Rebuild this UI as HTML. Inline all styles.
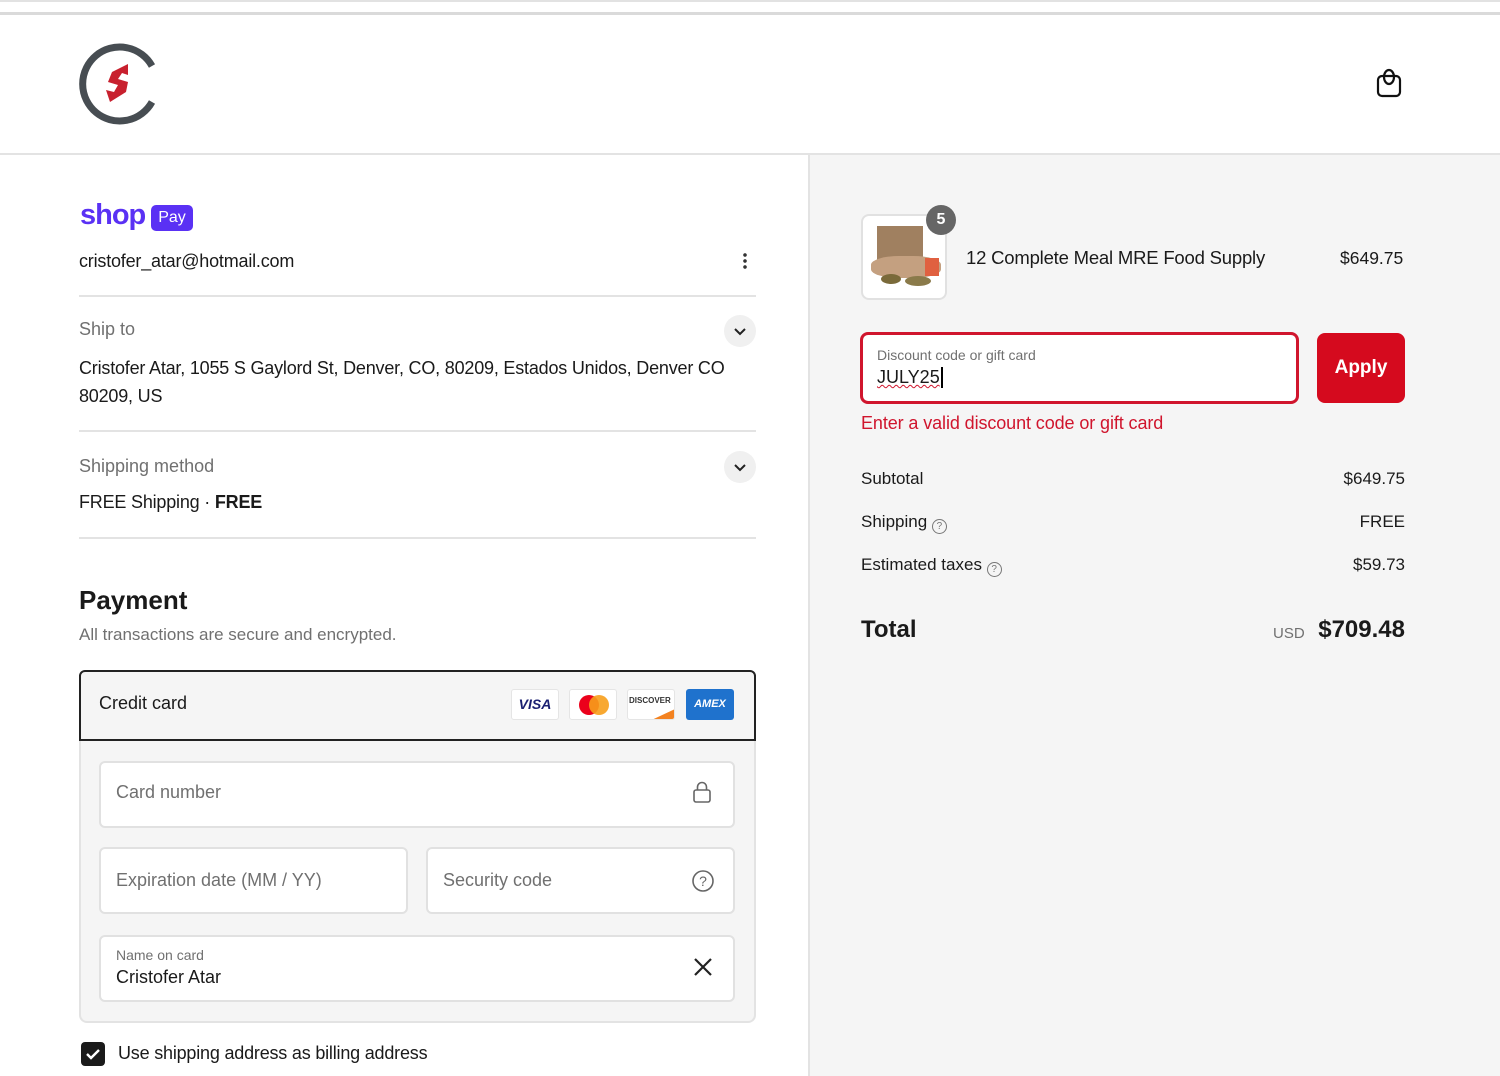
<!DOCTYPE html>
<html><head><meta charset="utf-8"><style>
*{box-sizing:border-box;margin:0;padding:0}
body{width:1500px;height:1076px;overflow:hidden;background:#fff;font-family:"Liberation Sans",sans-serif;color:#1a1a1a;position:relative;font-size:17px}
.a{position:absolute}
.muted{color:#707070}
.hr{position:absolute;left:79px;width:677px;height:2px;background:#e3e3e3}
.chev{position:absolute;width:32px;height:32px;border-radius:16px;background:#f0f0f0}
.field{position:absolute;background:#fff;border:2px solid #e1e1e1;border-radius:6px}
.ph{position:absolute;color:#707070;font-size:18px}
.row{position:absolute;left:861px;width:544px;font-size:17px}
.row span:last-child{position:absolute;right:0}
</style></head><body>
<div class="a" style="left:0;top:0;width:1500px;height:2px;background:#e2e2e2"></div>
<div class="a" style="left:0;top:12px;width:1500px;height:3px;background:#dadada"></div>
<svg class="a" style="left:78px;top:42px" width="80" height="84" viewBox="0 0 80 84">
<path d="M74 24 A37 37 0 1 0 74 60" fill="none" stroke="#474d52" stroke-width="7"/>
<path d="M50 22 L34 30 L30 40 L40 43 L36 50 L28 48 L32 60 L48 50 L50 40 L40 37 L44 31 L50 33 Z" fill="#c8202e"/>
</svg>
<svg class="a" style="left:1374px;top:67px" width="30" height="32" viewBox="0 0 30 32">
<rect x="4" y="9" width="22" height="20" rx="4" fill="none" stroke="#111" stroke-width="2.2"/>
<ellipse cx="15" cy="10" rx="5" ry="7" fill="none" stroke="#111" stroke-width="2.2"/>
</svg>
<div class="a" style="left:0;top:153px;width:1500px;height:2px;background:#e3e3e3"></div>
<div class="a" style="left:808px;top:155px;width:692px;height:921px;background:#f5f5f5;border-left:2px solid #e3e3e3"></div>

<div class="a" style="left:80px;top:199px;font-size:29px;font-weight:bold;color:#5a31f4;letter-spacing:-1px">shop</div>
<div class="a" style="left:151px;top:205px;width:42px;height:26px;background:#5a31f4;border-radius:5px;color:#fff;font-size:16px;text-align:center;line-height:26px">Pay</div>
<div class="a" style="left:79px;top:251px;font-size:18px;letter-spacing:-0.2px">cristofer_atar@hotmail.com</div>
<div class="a" style="left:743px;top:252px;width:4px;height:18px;background:radial-gradient(circle,#333 1.6px,transparent 2px) 0 0/4px 6px"></div>
<div class="hr" style="top:295px"></div>
<div class="a muted" style="left:79px;top:319px;font-size:18px">Ship to</div>
<div class="chev" style="left:724px;top:315px"><svg width="32" height="32"><path d="M11 14 L16 19 L21 14" fill="none" stroke="#222" stroke-width="2"/></svg></div>
<div class="a" style="left:79px;top:354px;font-size:18px;line-height:28px;width:680px;letter-spacing:-0.2px">Cristofer Atar, 1055 S Gaylord St, Denver, CO, 80209, Estados Unidos, Denver CO 80209, US</div>
<div class="hr" style="top:430px"></div>
<div class="a muted" style="left:79px;top:456px;font-size:18px">Shipping method</div>
<div class="chev" style="left:724px;top:451px"><svg width="32" height="32"><path d="M11 14 L16 19 L21 14" fill="none" stroke="#222" stroke-width="2"/></svg></div>
<div class="a" style="left:79px;top:492px;font-size:18px;letter-spacing:-0.2px">FREE Shipping · <b>FREE</b></div>
<div class="hr" style="top:537px"></div>
<div class="a" style="left:79px;top:585px;font-size:26px;font-weight:bold">Payment</div>
<div class="a muted" style="left:79px;top:625px;font-size:17px">All transactions are secure and encrypted.</div>
<div class="a" style="left:79px;top:739px;width:677px;height:284px;background:#f5f5f5;border:2px solid #e3e3e3;border-top:none;border-radius:0 0 8px 8px"></div>
<div class="a" style="left:79px;top:670px;width:677px;height:71px;background:#f5f5f5;border:2px solid #222;border-radius:6px 6px 0 0"></div>
<div class="a" style="left:99px;top:693px;font-size:18px">Credit card</div>
<div class="a" style="left:511px;top:689px;width:48px;height:31px;background:#fff;border:1px solid #e5e5e5;border-radius:3px;color:#1a1f71;font-weight:bold;font-style:italic;font-size:14px;text-align:center;line-height:29px">VISA</div>
<div class="a" style="left:569px;top:689px;width:48px;height:31px;background:#fff;border:1px solid #e5e5e5;border-radius:3px"><div class="a" style="left:9px;top:5px;width:20px;height:20px;border-radius:10px;background:#eb001b"></div><div class="a" style="left:19px;top:5px;width:20px;height:20px;border-radius:10px;background:#f79e1b;opacity:.9"></div></div>
<div class="a" style="left:627px;top:689px;width:48px;height:31px;background:#fff;border:1px solid #e5e5e5;border-radius:3px;overflow:hidden;font-size:8px;font-weight:bold;color:#333;padding:6px 0 0 1px">DISCOVER<div class="a" style="left:14px;top:22px;width:60px;height:30px;background:#f38220;transform:rotate(-25deg)"></div></div>
<div class="a" style="left:686px;top:689px;width:48px;height:31px;background:#1f72cd;border-radius:3px;color:#fff;font-weight:bold;font-style:italic;font-size:11px;text-align:center;line-height:31px">AMEX</div>
<div class="field" style="left:99px;top:761px;width:636px;height:67px"></div>
<div class="ph" style="left:116px;top:782px">Card number</div>
<svg class="a" style="left:692px;top:781px" width="20" height="22"><rect x="2" y="9" width="16" height="12" rx="2" fill="none" stroke="#666" stroke-width="1.6"/><path d="M5.5 9 V6 a4.5 4.5 0 0 1 9 0 V9" fill="none" stroke="#666" stroke-width="1.6"/></svg>
<div class="field" style="left:99px;top:847px;width:309px;height:67px"></div>
<div class="ph" style="left:116px;top:870px">Expiration date (MM / YY)</div>
<div class="field" style="left:426px;top:847px;width:309px;height:67px"></div>
<div class="ph" style="left:443px;top:870px">Security code</div>
<svg class="a" style="left:691px;top:869px" width="24" height="24"><circle cx="12" cy="12" r="10" fill="none" stroke="#666" stroke-width="1.6"/><text x="12" y="17" font-size="14" text-anchor="middle" fill="#666" font-family="Liberation Sans">?</text></svg>
<div class="field" style="left:99px;top:935px;width:636px;height:67px"></div>
<div class="a muted" style="left:116px;top:947px;font-size:14px">Name on card</div>
<div class="a" style="left:116px;top:967px;font-size:18px">Cristofer Atar</div>
<svg class="a" style="left:692px;top:956px" width="22" height="22"><path d="M3 3 L19 19 M19 3 L3 19" stroke="#222" stroke-width="2.2"/></svg>
<div class="a" style="left:81px;top:1042px;width:24px;height:24px;background:#1a1a1a;border-radius:4px"><svg width="24" height="24"><path d="M6 12 L10 16 L18 8" fill="none" stroke="#fff" stroke-width="2.4"/></svg></div>
<div class="a" style="left:118px;top:1043px;font-size:18px;letter-spacing:-0.2px">Use shipping address as billing address</div>

<div class="a" style="left:861px;top:214px;width:86px;height:86px;background:#fff;border:2px solid #e1e1e1;border-radius:8px;overflow:hidden">
<div class="a" style="left:14px;top:10px;width:46px;height:34px;background:#a08060"></div>
<div class="a" style="left:8px;top:40px;width:70px;height:22px;background:#c4a080;border-radius:40%"></div>
<div class="a" style="left:18px;top:58px;width:20px;height:10px;background:#7a6a3a;border-radius:50%"></div>
<div class="a" style="left:42px;top:60px;width:26px;height:10px;background:#8a7a4a;border-radius:50%"></div>
<div class="a" style="left:62px;top:42px;width:14px;height:18px;background:#e06040"></div>
</div>
<div class="a" style="left:926px;top:205px;width:30px;height:30px;border-radius:15px;background:#666;color:#fff;text-align:center;line-height:30px;font-size:16px;font-weight:bold">5</div>
<div class="a" style="left:966px;top:247px;font-size:18.5px;letter-spacing:-0.2px">12 Complete Meal MRE Food Supply</div>
<div class="a" style="left:1340px;top:248px;font-size:17.5px">$649.75</div>
<div class="a" style="left:860px;top:332px;width:439px;height:72px;background:#fff;border:3px solid #d0152d;border-radius:8px"></div>
<div class="a muted" style="left:877px;top:347px;font-size:14px">Discount code or gift card</div>
<div class="a" style="left:877px;top:367px;font-size:18px;border-right:2px solid #000;padding-right:1px;text-decoration:underline wavy #d0152d;text-decoration-thickness:1px">JULY25</div>
<div class="a" style="left:1317px;top:333px;width:88px;height:70px;background:#d50a1e;border-radius:8px;color:#fff;font-weight:bold;font-size:19px;text-align:center;line-height:70px">Apply</div>
<div class="a" style="left:861px;top:413px;font-size:18px;color:#d0152d;letter-spacing:-0.1px">Enter a valid discount code or gift card</div>
<div class="row" style="top:469px"><span>Subtotal</span><span>$649.75</span></div>
<div class="row" style="top:512px"><span>Shipping <span style="display:inline-block;width:15px;height:15px;border:1.5px solid #777;border-radius:8px;font-size:10px;text-align:center;line-height:13px;color:#777;vertical-align:-2px;position:static">?</span></span><span>FREE</span></div>
<div class="row" style="top:555px"><span>Estimated taxes <span style="display:inline-block;width:15px;height:15px;border:1.5px solid #777;border-radius:8px;font-size:10px;text-align:center;line-height:13px;color:#777;vertical-align:-2px;position:static">?</span></span><span>$59.73</span></div>
<div class="a" style="left:861px;top:616px;font-size:24px;font-weight:bold">Total</div>
<div class="a" style="left:1273px;top:625px;font-size:15px;color:#707070">USD</div>
<div class="a" style="left:1314px;top:616px;font-size:24px;font-weight:bold;width:91px;text-align:right">$709.48</div>
</body></html>
